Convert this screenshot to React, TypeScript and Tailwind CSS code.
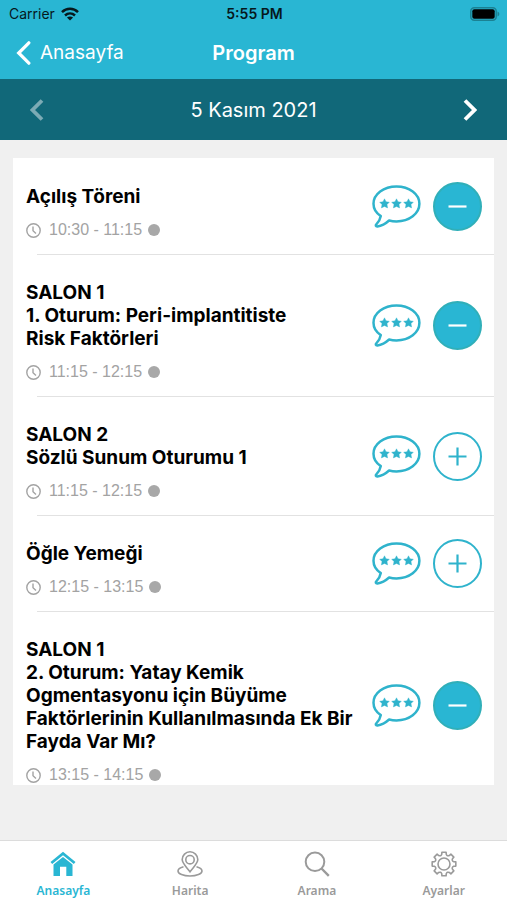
import React, { useState } from 'react';

type Session = { id: number; title: string; time: string; added: boolean };

const initialSessions: Session[] = [
  { id: 1, title: 'Açılış Töreni', time: '10:30 - 11:15', added: true },
  { id: 2, title: 'SALON 1\n1. Oturum: Peri-implantitiste\nRisk Faktörleri', time: '11:15 - 12:15', added: true },
  { id: 3, title: 'SALON 2\nSözlü Sunum Oturumu 1', time: '11:15 - 12:15', added: false },
  { id: 4, title: 'Öğle Yemeği', time: '12:15 - 13:15', added: false },
  {
    id: 5,
    title: 'SALON 1\n2. Oturum: Yatay Kemik\nOgmentasyonu için Büyüme\nFaktörlerinin Kullanılmasında Ek Bir\nFayda Var Mı?',
    time: '13:15 - 14:15',
    added: true,
  },
];

const polar = (r: number, deg: number) => {
  const a = (deg * Math.PI) / 180;
  return `${(13 + r * Math.cos(a)).toFixed(2)} ${(13 + r * Math.sin(a)).toFixed(2)}`;
};

// Eight teeth with a rounded valley between each pair
const gearPath =
  Array.from({ length: 8 }, (_, i) => {
    const c = i * 45;
    return `${i === 0 ? 'M' : 'L'}${polar(10, c - 13)} L${polar(12, c - 10)} L${polar(12, c + 10)} L${polar(10, c + 13)} Q${polar(8.2, c + 22.5)} ${polar(10, c + 32)}`;
  }).join(' ') + 'Z';

function WifiIcon() {
  return (
    <svg width="18" height="14" viewBox="0 0 18 14" fill="none" stroke="#06181d" strokeWidth="2.5" aria-hidden="true">
      <path d="M1 5.2C5.5 .7 12.500 .7 17 5.200" />
      <path d="M4 8.500c2.900-2.700 7.100-2.700 10 0" />
      <path d="M9 13.500 5.900 10.600c1.800-1.500 4.400-1.500 6.200 0Z" fill="#06181d" stroke="none" />
    </svg>
  );
}

function BatteryIcon() {
  return (
    <svg width="30" height="14" viewBox="0 0 30 14" aria-hidden="true">
      <rect x=".8" y=".8" width="25.400" height="12.400" rx="3.500" fill="none" stroke="#1b8193" strokeWidth="1.500" />
      <rect x="2.300" y="2.300" width="22.400" height="9.400" rx="2" fill="#000" />
      <path d="M27.500 4.500c2.400.7 2.400 4.300 0 5Z" fill="#1b8193" />
    </svg>
  );
}

function Chevron({ flip = false, small = false }: { flip?: boolean; small?: boolean }) {
  return (
    <svg
      width={small ? 14 : 15}
      height={small ? 22 : 24}
      viewBox="0 0 14 22"
      fill="none"
      stroke="currentColor"
      strokeWidth={small ? 3.8 : 3}
      strokeLinecap={small ? 'butt' : 'round'}
      aria-hidden="true"
    >
      <path d={flip ? 'M2 1.500 11.500 11 2 20.500' : 'M12 1.500 2.500 11 12 20.500'} />
    </svg>
  );
}

function ClockIcon() {
  return (
    <svg width="15" height="15" viewBox="0 0 15 15" fill="none" stroke="#a3a3a3" strokeWidth="1.400" aria-hidden="true">
      <circle cx="7.500" cy="7.500" r="6.700" />
      <path d="M7 3.500v4.300l3 2.700" />
    </svg>
  );
}

function CommentIcon() {
  return (
    <svg width="49" height="43" viewBox="0 0 49 43" aria-hidden="true">
      <path
        d="M24.500 1.500C11.700 1.500 1.500 9.200 1.500 18.800c0 5 2.600 9.300 7.300 12.300-.6 3.200-1.900 5.700-4.300 8-1.300 1.300-.8 2.500 1 2.300 4.600-.5 8-2.600 11.600-5.900 2.300.6 4.900.9 7.400.9 12.800 0 22.900-7.800 22.900-17.600S37.300 1.500 24.500 1.500Z"
        fill="none"
        stroke="#2fb3cc"
        strokeWidth="2.500"
        strokeLinejoin="round"
      />
      {[12.5, 24.5, 36.5].map((x) => (
        <path
          key={x}
          transform={`translate(${x} 18.500)`}
          d="M0-4.700 1.500-1.700 4.800-1.300 2.500 1.100 3.100 4.400 0 2.900-3.100 4.400-2.500 1.100-4.800-1.300-1.500-1.700Z"
          fill="#2fb3cc"
          stroke="#2fb3cc"
          strokeWidth=".4"
        />
      ))}
    </svg>
  );
}

function HomeIcon() {
  return (
    <svg width="26" height="26" viewBox="0 0 26 26" fill="#29b6d3" aria-hidden="true">
      <path d="M13 .8 25.500 11l-1.700 2L13 4.300 2.200 13 .5 11Z" />
      <path d="M13 6 22.500 13.600V25h-6.200v-9.200H10V25H3.500V13.600Z" />
    </svg>
  );
}

function MapIcon() {
  return (
    <svg width="26" height="26" viewBox="0 0 26 26" fill="none" stroke="#9a9a9a" strokeWidth="1.600" aria-hidden="true">
      <path d="M13 20.800C9.500 16 5.200 12.400 5.200 8.600a7.800 7.800 0 0 1 15.600 0C20.800 12.400 16.500 16 13 20.800Z" />
      <circle cx="13" cy="8.700" r="4.200" />
      <path d="M6.500 15.800C3 16.700 1 18.200 1 20c0 2.800 5.400 5 12 5s12-2.200 12-5c0-1.800-2-3.300-5.500-4.200" />
    </svg>
  );
}

function SearchIcon() {
  return (
    <svg width="26" height="26" viewBox="0 0 26 26" fill="none" stroke="#9a9a9a" strokeWidth="2" aria-hidden="true">
      <circle cx="11" cy="10.800" r="9.300" />
      <path d="m17.500 17.500 7.300 7.300" strokeWidth="2.400" />
    </svg>
  );
}

function GearIcon() {
  return (
    <svg width="26" height="26" viewBox="0 0 26 26" fill="none" stroke="#9a9a9a" strokeWidth="1.600" strokeLinejoin="round" aria-hidden="true">
      <path d={gearPath} />
      <circle cx="13" cy="13" r="6" />
    </svg>
  );
}

const tabs = [
  { label: 'Anasayfa', icon: <HomeIcon />, active: true },
  { label: 'Harita', icon: <MapIcon />, active: false },
  { label: 'Arama', icon: <SearchIcon />, active: false },
  { label: 'Ayarlar', icon: <GearIcon />, active: false },
];

function SessionRow({ session, last, onToggle }: { session: Session; last: boolean; onToggle: () => void }) {
  return (
    <li>
      <div className="flex items-center pr-3 pl-[13px]">
        <div className="min-w-0 flex-1 pt-[26px] pb-[15px]">
          <h2 className="whitespace-pre-line text-[19px] leading-[23px] font-bold text-black">{session.title}</h2>
          <div className="mt-[13px] flex h-[18px] items-center font-['Liberation_Sans',sans-serif] text-base text-[#a3a3a3]">
            <ClockIcon />
            <time className="ml-2">{session.time}</time>
            <span className="ml-1.5 size-3 rounded-full bg-[#a8a8a8]" />
          </div>
        </div>
        <button type="button" aria-label="Değerlendir" className="mr-3 shrink-0">
          <CommentIcon />
        </button>
        <button
          type="button"
          onClick={onToggle}
          aria-label={session.added ? 'Programdan çıkar' : 'Programa ekle'}
          className={`flex size-[49px] shrink-0 items-center justify-center rounded-full border-2 ${
            session.added ? 'border-[#30afb9] bg-[#29b6d3] text-white' : 'border-[#2fb3cc] bg-white text-[#2fb3cc]'
          }`}
        >
          <svg width="19" height="19" viewBox="0 0 19 19" stroke="currentColor" strokeWidth="2.200" aria-hidden="true">
            <path d={session.added ? 'M.5 9.500h18' : 'M.5 9.500h18M9.500.5v18'} />
          </svg>
        </button>
      </div>
      {!last && <div className="ml-6 h-px bg-[#e2e2e2]" />}
    </li>
  );
}

export default function App() {
  const [sessions, setSessions] = useState(initialSessions);

  const toggle = (id: number) => {
    setSessions((prev) => prev.map((s) => (s.id === id ? { ...s, added: !s.added } : s)));
  };

  return (
    <div className="flex h-screen flex-col bg-[#f0f0f0] font-[Inter,sans-serif]">
      <header className="bg-[#29b6d3]">
        {/* Status bar */}
        <div className="grid h-[27px] grid-cols-3 items-center pl-[9px] pr-[7px] text-sm text-[#06181d]">
          <div className="flex items-center gap-1.5">
            <span>Carrier</span>
            <WifiIcon />
          </div>
          <span className="text-center font-semibold">5:55 PM</span>
          <div className="flex justify-end">
            <BatteryIcon />
          </div>
        </div>

        {/* Navigation bar */}
        <div className="grid h-[52px] grid-cols-3 items-center px-4 text-xl text-white">
          <a href="#anasayfa" className="flex items-center gap-[9px] text-[19px]">
            <Chevron />
            <span>Anasayfa</span>
          </a>
          <h1 className="text-center font-semibold">Program</h1>
        </div>
      </header>

      {/* Day picker */}
      <div className="flex h-[61px] items-center justify-between bg-[#116879] px-[30px] text-xl text-white">
        <button type="button" aria-label="Önceki gün" className="text-[#7cabb5]">
          <Chevron small />
        </button>
        <span>5 Kasım 2021</span>
        <button type="button" aria-label="Sonraki gün">
          <Chevron flip small />
        </button>
      </div>

      <main className="flex min-h-0 flex-1 flex-col px-[13px] pt-[18px] pb-[55px]">
        <ul className="min-h-0 flex-1 overflow-y-auto bg-white pt-px [scrollbar-width:none]">
          {sessions.map((s, i) => (
            <SessionRow key={s.id} session={s} last={i === sessions.length - 1} onToggle={() => toggle(s.id)} />
          ))}
        </ul>
      </main>

      <nav className="grid h-[60px] grid-cols-4 border-t border-[#dcdcdc] bg-white font-['Noto_Sans',sans-serif] text-xs font-semibold">
        {tabs.map((tab) => (
          <a
            key={tab.label}
            href={`#${tab.label.toLowerCase()}`}
            className={`flex flex-col items-center gap-1.5 pt-2.5 ${tab.active ? 'text-[#29b6d3]' : 'text-[#9a9a9a]'}`}
          >
            {tab.icon}
            <span className="leading-4">{tab.label}</span>
          </a>
        ))}
      </nav>
    </div>
  );
}
